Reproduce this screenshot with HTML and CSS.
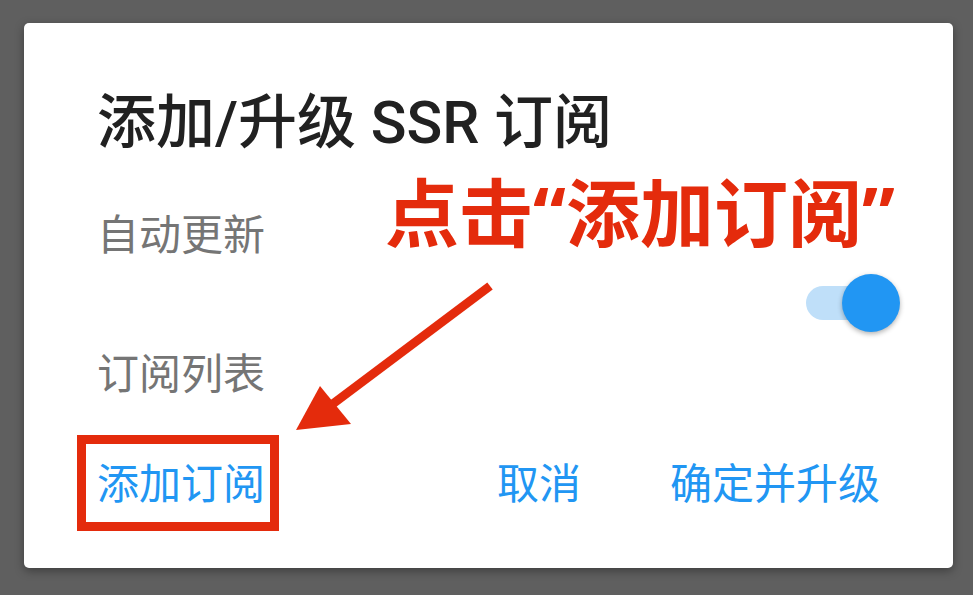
FILE: index.html
```html
<!DOCTYPE html>
<html lang="zh-CN">
<head>
<meta charset="utf-8">
<title>添加/升级 SSR 订阅</title>
<link rel="stylesheet" href="styles.css">
</head>
<body>
<div class="dialog">
  <h1 class="title">添加/升级 SSR 订阅</h1>
  <div class="label label-auto">自动更新</div>
  <div class="switch-row">
    <div class="switch">
      <div class="track"></div>
      <div class="thumb"></div>
    </div>
  </div>
  <div class="label label-list">订阅列表</div>
  <div class="actions">
    <span class="btn btn-add">添加订阅</span>
    <span class="spacer"></span>
    <span class="btn">取消</span>
    <span class="btn btn-ok">确定并升级</span>
  </div>
</div>
<div class="note">点击<span class="q">“</span>添加订阅<span class="q">”</span></div>
<svg class="overlay" width="973" height="595" viewBox="0 0 973 595">
  <rect x="81.5" y="439.5" width="193" height="87" fill="none" stroke="#e42b0c" stroke-width="9"/>
  <line x1="490" y1="286" x2="330" y2="406" stroke="#e42b0c" stroke-width="9"/>
  <polygon points="296,430 320,386 351,424" fill="#e42b0c"/>
</svg>
</body>
</html>
```
FILE: styles.css
```css
html, body {
  margin: 0;
  padding: 0;
}
body {
  width: 973px;
  height: 595px;
  background: #5f5f5f;
  overflow: hidden;
  position: relative;
  font-family: "Roboto", "Noto Sans CJK SC", sans-serif;
}
.dialog {
  box-sizing: border-box;
  margin: 23px 0 0 24px;
  width: 929px;
  height: 545px;
  background: #ffffff;
  border-radius: 5px;
  box-shadow: 0 3px 10px rgba(0, 0, 0, 0.35);
  padding: 65px 52px 0 73px;
  display: flex;
  flex-direction: column;
}
.title {
  margin: 0;
  font-size: 59px;
  line-height: 70px;
  font-weight: 500;
  color: #212121;
}
.label {
  font-size: 42px;
  line-height: 50px;
  color: #757575;
}
.label-auto {
  margin-top: 53px;
}
.switch-row {
  display: flex;
  justify-content: flex-end;
  margin-top: 12px;
}
.switch {
  position: relative;
  width: 95px;
  height: 60px;
}
.track {
  position: absolute;
  left: 0;
  top: 13px;
  width: 80px;
  height: 34px;
  border-radius: 17px;
  background: #bfdff9;
}
.thumb {
  position: absolute;
  right: 1px;
  top: 1px;
  width: 58px;
  height: 58px;
  border-radius: 50%;
  background: #2196f3;
  box-shadow: 0 2px 5px rgba(0, 0, 0, 0.3);
}
.label-list {
  margin-top: 17px;
}
.actions {
  display: flex;
  align-items: center;
  margin-top: 60px;
  padding-right: 21px;
}
.btn {
  font-size: 42px;
  line-height: 50px;
  color: #2196f3;
}
.spacer {
  flex: 1;
}
.btn-ok {
  margin-left: 89px;
}
.note {
  position: absolute;
  left: 385px;
  top: 170px;
  font-size: 74px;
  line-height: 86px;
  font-weight: 700;
  color: #e42b0c;
  white-space: nowrap;
}
.note .q {
  font-family: "Noto Sans", sans-serif;
}
.overlay {
  position: absolute;
  left: 0;
  top: 0;
}
```
